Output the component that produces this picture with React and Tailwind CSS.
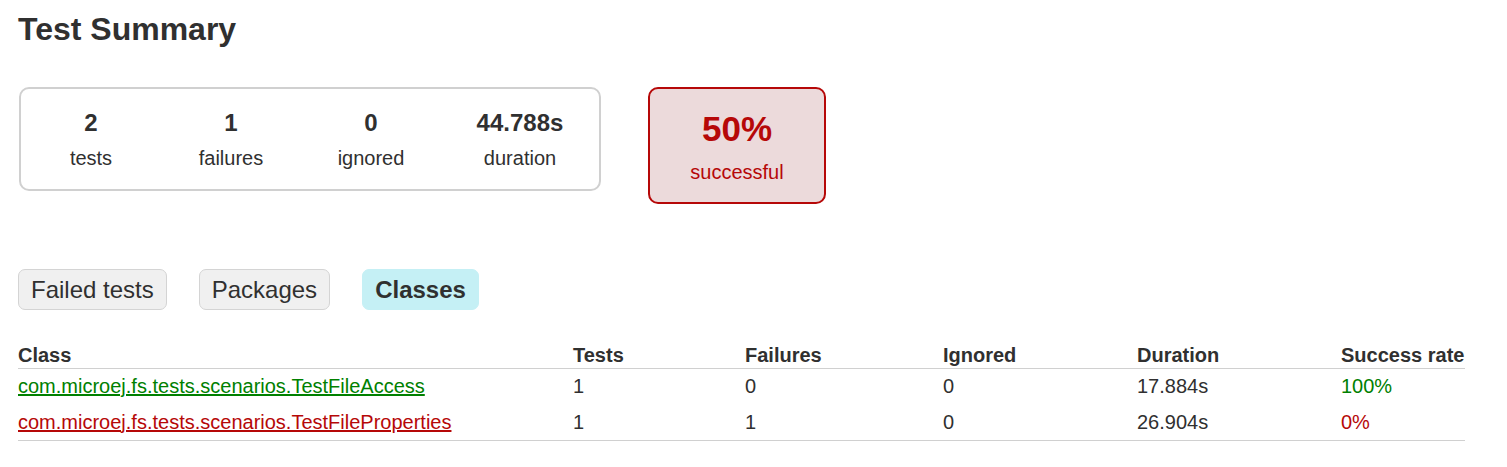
import React from "react";

const counters = [
    { value: "2", label: "tests", width: "w-[140px]" },
    { value: "1", label: "failures", width: "w-[140px]" },
    { value: "0", label: "ignored", width: "w-[140px]" },
    { value: "44.788s", label: "duration", width: "w-[158px]" },
];

const tabs = [
    { label: "Failed tests", selected: false },
    { label: "Packages", selected: false },
    { label: "Classes", selected: true },
];

const rows = [
    { name: "com.microej.fs.tests.scenarios.TestFileAccess", tests: 1, failures: 0, ignored: 0, duration: "17.884s", rate: "100%", ok: true },
    { name: "com.microej.fs.tests.scenarios.TestFileProperties", tests: 1, failures: 1, ignored: 0, duration: "26.904s", rate: "0%", ok: false },
];

const cols = "grid grid-cols-[555px_172px_198px_194px_204px_124px]";

export default function App() {
    return (
        <div className="min-h-screen bg-white px-[18px] text-[#303030] text-[20px] leading-[1.15]" style={{ fontFamily: '"Liberation Sans", Arial, sans-serif' }}>
            <h1 className="pt-[11px] text-[32px] font-bold leading-[1.15]">Test Summary</h1>

            {/* summary boxes */}
            <div className="mt-[39px] flex items-start">
                <div className="ml-px flex rounded-[10px] border-2 border-[#d0d0d0]">
                    {counters.map((c) => (
                        <div key={c.label} className={`${c.width} pt-[20px] pb-[19px] text-center`}>
                            <div className="mb-[11px] text-[24px] font-bold">{c.value}</div>
                            <div>{c.label}</div>
                        </div>
                    ))}
                </div>
                <div className="ml-[47px] w-[178px] rounded-[10px] border-2 border-[#b60808] bg-[#ecdadb] pt-[20px] pb-[18px] text-center text-[#b60808]">
                    <div className="mb-[12px] text-[35px] font-bold">50%</div>
                    <div>successful</div>
                </div>
            </div>

            {/* tabs */}
            <ul className="mt-[65px] flex gap-[32px]">
                {tabs.map((t) => (
                    <li
                        key={t.label}
                        className={`rounded-[7px] border px-[12px] pt-[6px] pb-[5px] text-[24px] ${
                            t.selected ? "border-[#c5f0f5] bg-[#c5f0f5] font-bold" : "border-[#d4d4d4] bg-[#f0f0f0]"
                        }`}
                    >
                        {t.label}
                    </li>
                ))}
            </ul>

            {/* classes table */}
            <div className="mt-[34px] w-[1447px]">
                <div className={`${cols} border-b border-[#d0d0d0] pb-px font-bold`}>
                    <div>Class</div>
                    <div>Tests</div>
                    <div>Failures</div>
                    <div>Ignored</div>
                    <div>Duration</div>
                    <div>Success rate</div>
                </div>
                <div className="border-b border-[#d0d0d0]">
                    {rows.map((r) => (
                        <div key={r.name} className={`${cols} pt-[6.5px] pb-[6px]`}>
                            <div>
                                <a href="#" className={`underline ${r.ok ? "text-[#008000]" : "text-[#b60808]"}`}>{r.name}</a>
                            </div>
                            <div>{r.tests}</div>
                            <div>{r.failures}</div>
                            <div>{r.ignored}</div>
                            <div>{r.duration}</div>
                            <div className={r.ok ? "text-[#008000]" : "text-[#b60808]"}>{r.rate}</div>
                        </div>
                    ))}
                </div>
            </div>
        </div>
    );
}
